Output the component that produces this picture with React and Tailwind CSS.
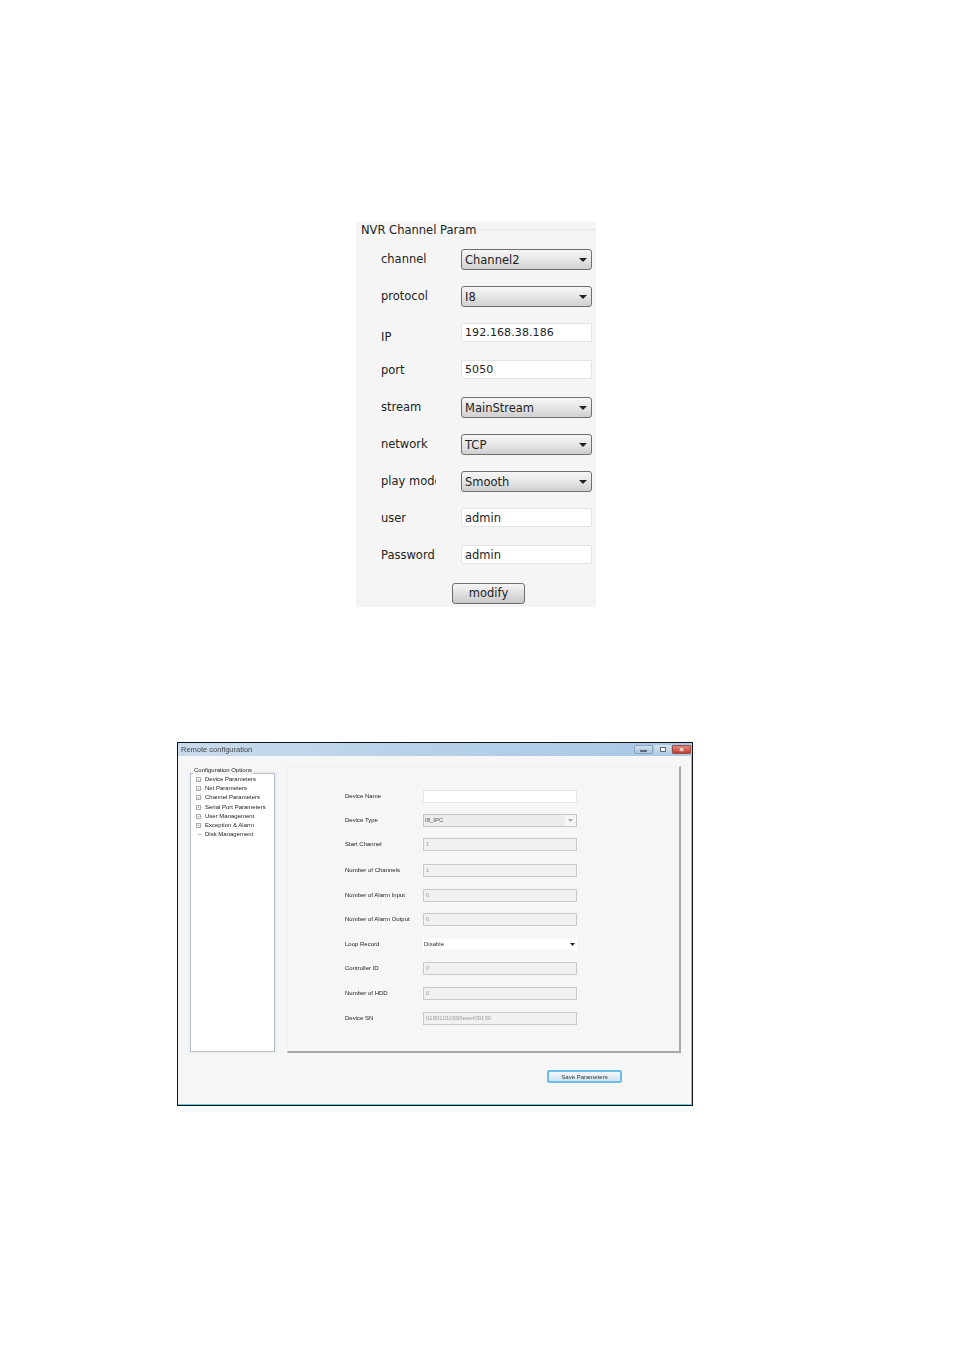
const PANEL_ROWS = [
  { label: 'channel', type: 'select', value: 'Channel2' },
  { label: 'protocol', type: 'select', value: 'I8' },
  { label: 'IP', type: 'input', value: '192.168.38.186', digits: true },
  { label: 'port', type: 'input', value: '5050', digits: true },
  { label: 'stream', type: 'select', value: 'MainStream' },
  { label: 'network', type: 'select', value: 'TCP' },
  { label: 'play mode', type: 'select', value: 'Smooth' },
  { label: 'user', type: 'input', value: 'admin' },
  { label: 'Password', type: 'input', value: 'admin' },
];

const TREE_ITEMS = [
  'Device Parameters',
  'Net Parameters',
  'Channel Parameters',
  'Serial Port Parameters',
  'User Management',
  'Exception & Alarm',
  'Disk Management',
];

const CONFIG_ROWS = [
  { label: 'Device Name', kind: 'blank', h: 'h-[24px]' },
  { label: 'Device Type', kind: 'combo', value: 'I8_IPC', h: 'h-[24px]' },
  { label: 'Start Channel', kind: 'off', value: '1', h: 'h-[25px]' },
  { label: 'Number of Channels', kind: 'off', value: '1', h: 'h-[26px]' },
  { label: 'Number of Alarm Input', kind: 'off', value: '0', h: 'h-[24px]' },
  { label: 'Number of Alarm Output', kind: 'off', value: '0', h: 'h-[25px]' },
  { label: 'Loop Record', kind: 'drop', value: 'Disable', h: 'h-[24px]' },
  { label: 'Controller ID', kind: 'off', value: '0', h: 'h-[24px]' },
  { label: 'Number of HDD', kind: 'off', value: '0', h: 'h-[26px]' },
  { label: 'Device SN', kind: 'off', value: '01801010699eaef09130', h: 'h-[24px]' },
];

function Caret({ className }) {
  return (
    <svg className={className} width="8" height="4" viewBox="0 0 8 4">
      <path d="M0 0h8L4 4z" fill="currentColor" />
    </svg>
  );
}

function PanelRow({ row }) {
  return (
    <div className="flex h-[37px] items-center pl-[25px] pr-1">
      <div className={`w-[55px] shrink-0 overflow-hidden whitespace-nowrap ${row.label === 'IP' ? 'pt-[9px]' : ''}`}>
        {row.label}
      </div>
      <div className="ml-[25px] flex-1">
        {row.type === 'select' ? (
          <div className="flex h-[21px] items-center justify-between rounded-[3px] border border-[#6e6e6e] bg-gradient-to-b from-[#f6f6f6] via-[#e6e6e6] to-[#cfcfcf] pl-[3px] pr-[4px] pt-[2px]">
            <span>{row.value}</span>
            <Caret className="-mt-[2px] text-[#222]" />
          </div>
        ) : (
          <div className={`mb-[2px] flex h-[19px] items-center rounded-[1px] border border-[#e3e3e8] bg-white pl-[3px] pt-[2px] ${row.digits ? 'text-[11px] tracking-[0.1px]' : ''}`}>
            {row.value}
          </div>
        )}
      </div>
    </div>
  );
}

function ChannelPanel() {
  return (
    <section className="ml-[356px] h-[385px] w-[240px] bg-[#f5f5f5] font-['DejaVu_Sans',sans-serif] text-[11.5px] text-[#222]">
      <div className="flex h-[19px] items-start gap-px pl-[5px]">
        <span>NVR Channel Param</span>
        <div className="mt-[7px] h-px flex-1 bg-[#e4e4e4]" />
      </div>
      {PANEL_ROWS.map((row) => (
        <PanelRow key={row.label} row={row} />
      ))}
      <div className="mt-[9px] flex pl-[96px]">
        <button className="h-[21px] w-[73px] rounded-[3px] border border-[#6e6e6e] bg-gradient-to-b from-[#f6f6f6] to-[#c9c9c9] text-[#222]">
          modify
        </button>
      </div>
    </section>
  );
}

function TreeItem({ label, leaf }) {
  return (
    <div className="flex h-[9.17px] items-center whitespace-nowrap">
      {leaf ? (
        <span className="ml-[7px] h-px w-[4px] bg-[#bbb]" />
      ) : (
        <span className="ml-[5px] flex h-[5px] w-[5px] items-center justify-center border border-[#b0b0b0] bg-white text-[4px] leading-none text-[#555]">
          +
        </span>
      )}
      {!leaf && <span className="h-px w-px bg-[#ccc]" />}
      <span className="ml-[3px]">{label}</span>
    </div>
  );
}

function ConfigField({ row }) {
  if (row.kind === 'blank') {
    return <div className="h-[13px] w-[154px] border border-[#e6e6e6] bg-white" />;
  }
  if (row.kind === 'combo') {
    return (
      <div className="flex h-[13px] w-[154px] items-center justify-between border border-[#c4c4c4] bg-[#ececec] pl-px text-[#555]">
        <span>{row.value}</span>
        <span className="flex h-full w-[11px] items-center justify-center bg-[#f6f6f6]">
          <svg width="5" height="3" viewBox="0 0 5 3">
            <path d="M0 0h5L2.5 3z" fill="#aaa" />
          </svg>
        </span>
      </div>
    );
  }
  if (row.kind === 'drop') {
    return (
      <div className="flex h-[12px] w-[154px] items-center justify-between bg-white pl-px pr-[2px] text-[#333]">
        <span>{row.value}</span>
        <svg width="5" height="3" viewBox="0 0 5 3">
          <path d="M0 0h5L2.5 3z" fill="#222" />
        </svg>
      </div>
    );
  }
  return (
    <div className="flex h-[13px] w-[154px] items-center border border-[#c9c9c9] bg-[#f1f1f1] pl-[2px] text-[#a0a0a0]">
      {row.value}
    </div>
  );
}

function WindowControls() {
  return (
    <div className="flex items-center gap-px pr-px">
      <div className="flex h-[9px] w-[19px] items-center justify-center rounded-[1px] border border-[#8da6bf] bg-gradient-to-b from-[#d3e2f0] to-[#a9c3da]">
        <span className="mt-[2px] h-[2px] w-[7px] border border-[#5d6b78] bg-white" />
      </div>
      <div className="flex h-[9px] w-[17px] items-center justify-center rounded-[1px] bg-gradient-to-b from-[#d3e2f0] to-[#b4cbe0]">
        <span className="h-[5px] w-[6px] border border-[#5d6b78] bg-white" />
      </div>
      <div className="flex h-[9px] w-[19px] items-center justify-center rounded-[1px] border border-[#9c4b43] bg-gradient-to-b from-[#dd8b7e] to-[#c4392c] text-[8px] font-bold leading-none text-white">
        ×
      </div>
    </div>
  );
}

function RemoteWindow() {
  return (
    <section className="ml-[177px] mt-[135px] h-[364px] w-[516px] border border-[#111] bg-[#f6f6f6] font-['Liberation_Sans',sans-serif] text-[6px] text-[#222] shadow-[inset_0_-1px_0_#5fd0e8,inset_-1px_0_0_#5fd0e8]">
      <header className="flex h-[13px] items-center justify-between bg-gradient-to-r from-[#c9dcee] via-[#b6d0e8] to-[#a8c8e6] pl-[3px] text-[7.5px] text-[#444]">
        <span className="blur-[0.3px]">Remote configuration</span>
        <WindowControls />
      </header>
      <div className="flex">
        <div className="ml-[12px] mt-[10px] w-[85px] shrink-0">
          <div className="relative z-10 ml-[3px] w-fit bg-[#f6f6f6] px-px blur-[0.3px]">Configuration Options</div>
          <div className="-mt-[2px] h-[279px] border border-[#b8bcc6] bg-white pt-px shadow-[0_0_0_2px_#eef0f3]">
            <div className="blur-[0.3px]">
              {TREE_ITEMS.map((item, i) => (
                <TreeItem key={item} label={item} leaf={i === TREE_ITEMS.length - 1} />
              ))}
            </div>
          </div>
        </div>
        <div className="ml-[12px] mt-[10px] h-[287px] w-[394px] border-b-2 border-l border-r-2 border-t border-b-[#a8a8a8] border-l-[#f0f0f0] border-r-[#a8a8a8] border-t-[#f0f0f0] pl-[57px] pt-[17px]">
          <div className="blur-[0.3px]">
            {CONFIG_ROWS.map((row) => (
              <div key={row.label} className={`flex items-center ${row.h}`}>
                <div className="w-[78px] shrink-0 whitespace-nowrap">{row.label}</div>
                <ConfigField row={row} />
              </div>
            ))}
          </div>
        </div>
      </div>
      <div className="mt-[17px] flex pl-[369px]">
        <button className="h-[13px] w-[75px] rounded-[2px] border-2 border-[#69bde6] bg-gradient-to-b from-[#f4f9fc] to-[#cfe2ee] leading-none text-[#333]">
          <span className="blur-[0.3px]">Save Parameters</span>
        </button>
      </div>
    </section>
  );
}

export default function App() {
  return (
    <div className="h-[1348px] w-[954px] overflow-hidden bg-white pt-[222px]">
      <ChannelPanel />
      <RemoteWindow />
    </div>
  );
}
